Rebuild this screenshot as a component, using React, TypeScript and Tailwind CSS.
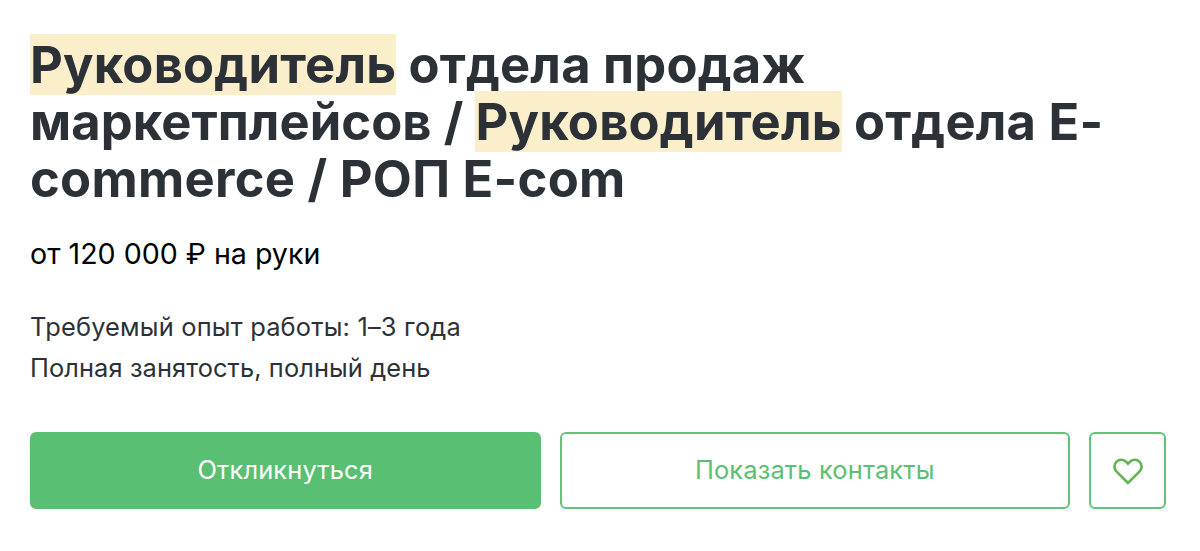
export default function App() {
  return (
    <main className="min-h-screen w-full bg-white pl-[30px] pr-[34px] pt-9 font-['Inter',sans-serif] text-[#2b3137]">
      <h1 className="w-[1110px] text-[50.7px] font-bold leading-[57px] tracking-[0.2px]">
        <span className="bg-[#fbeecb]">Руководитель</span> отдела продаж
        <br />
        <span className="tracking-[0.05px]">маркетплейсов / </span>
        <span className="bg-[#fbeecb]">Руководитель</span> отдела E-
        <br />
        <span className="tracking-[0.27px]">commerce / РОП E-com</span>
      </h1>

      <p className="mt-[27px] text-[28.6px] leading-[40px] text-black">
        от 120 000 ₽ на руки
      </p>

      <div className="mt-[32px] text-[25.4px] leading-[41px]">
        <p className="tracking-[0.2px]">Требуемый опыт работы: 1–3 года</p>
        <p className="tracking-[0.1px]">Полная занятость, полный день</p>
      </div>

      <div className="mt-[44px] flex h-[77px] gap-[19px] text-[25.4px] tracking-[0.18px]">
        <button className="flex-1 rounded-md border-2 border-[#59bf72] bg-[#59bf72] text-white">
          Откликнуться
        </button>
        <button className="flex-1 rounded-md border-2 border-[#62c37a] text-[#59bf72]">
          Показать контакты
        </button>
        <button className="flex w-[77px] items-center justify-center rounded-md border-2 border-[#62c37a]">
          <svg className="mt-[3px]" width="30" height="28" viewBox="0 0 30 28" fill="none" stroke="#64b254" strokeWidth="2.6">
            <path d="M15 25L3.6 13.6C0.7 10.7 0.7 6.2 3.6 3.6C6.5 1 10.7 1.2 13.4 4L15 5.6L16.6 4C19.3 1.2 23.5 1 26.4 3.6C29.3 6.2 29.3 10.7 26.4 13.6Z" />
          </svg>
        </button>
      </div>
    </main>
  )
}
